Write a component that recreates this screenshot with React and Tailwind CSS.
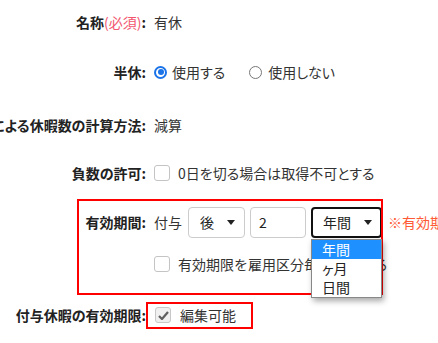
import React from 'react';

const font = { fontFamily: '"Noto Sans CJK JP", "Liberation Sans", sans-serif' };

function Label({ children }) {
  return (
    <div className="w-[146px] shrink-0 flex justify-end whitespace-nowrap font-bold text-[#222]">
      {children}
    </div>
  );
}

function Row({ h, children }) {
  return <div className={`flex items-center ${h}`}>{children}</div>;
}

function Radio({ checked }) {
  return checked ? (
    <span className="block w-[13px] h-[13px] rounded-full border-2 border-[#1a73e8] flex items-center justify-center bg-white">
      <span className="block w-[6px] h-[6px] rounded-full bg-[#1a73e8]" />
    </span>
  ) : (
    <span className="block w-[13px] h-[13px] rounded-full border border-[#777] bg-white" />
  );
}

function Checkbox({ checked }) {
  return (
    <span
      className={`w-[16px] h-[16px] rounded-[3px] border flex items-center justify-center ${
        checked ? 'border-[#c8c8c8] bg-[#f0f0f0]' : 'border-[#c4c4c4] bg-white'
      }`}
    >
      {checked && (
        <svg width="11" height="9" viewBox="0 0 11 9">
          <path d="M1 5 L4 8 L10 1" fill="none" stroke="#5f5f5f" strokeWidth="2.2" />
        </svg>
      )}
    </span>
  );
}

function Arrow() {
  return (
    <svg width="8" height="5" viewBox="0 0 8 5">
      <path d="M0 0 H8 L4 5 Z" fill="#222" />
    </svg>
  );
}

export default function App() {
  return (
    <div
      className="relative w-[438px] h-[343px] overflow-hidden bg-white text-[14px] text-[#333] [font-feature-settings:'palt']"
      style={font}
    >
      <Row h="h-[44px]">
        <Label>
          名称<span className="font-normal text-[#f2576f]">(必須)</span>:
        </Label>
        <span className="ml-[8px]">有休</span>
      </Row>

      <Row h="h-[56px]">
        <Label>半休:</Label>
        <div className="ml-[8px] flex items-center">
          <Radio checked />
          <span className="ml-[5px]">使用する</span>
          <span className="ml-[24px]"><Radio /></span>
          <span className="ml-[6px]">使用しない</span>
        </div>
      </Row>

      <Row h="h-[50px]">
        <Label>端数による休暇数の計算方法:</Label>
        <span className="ml-[8px]">減算</span>
      </Row>

      <Row h="h-[46px]">
        <Label>負数の許可:</Label>
        <div className="ml-[8px] flex items-center">
          <Checkbox />
          <span className="ml-[8px]">0日を切る場合は取得不可とする</span>
        </div>
      </Row>

      <Row h="h-[52px]">
        <Label>有効期間:</Label>
        <div className="ml-[8px] flex items-center whitespace-nowrap">
          <span>付与</span>
          <div className="ml-[6px] w-[57px] h-[31px] rounded-[4px] border border-[#ccc] flex items-center justify-between pl-[11px] pr-[9px] text-[#222]">
            <span>後</span>
            <Arrow />
          </div>
          <div className="ml-[5px] w-[56px] h-[31px] rounded-[4px] border border-[#ccc] flex items-center pl-[8px] text-[#222]">
            2
          </div>
          <div className="relative ml-[5px] w-[71px] h-[31px]">
            <div className="w-full h-full rounded-[4px] border-2 border-[#111] flex items-center justify-between pl-[10px] pr-[8px] text-[#222]">
              <span>年間</span>
              <Arrow />
            </div>
            <div className="absolute left-0 top-[32px] w-[71px] border border-[#888] bg-white shadow-[2px_3px_6px_rgba(0,0,0,0.35)] z-10 text-[#222]">
              <div className="h-[19px] flex items-center pl-[10px] bg-[#1e90ff] text-white">年間</div>
              <div className="h-[19px] flex items-center pl-[10px]">ヶ月</div>
              <div className="h-[19px] flex items-center pl-[10px]">日間</div>
            </div>
          </div>
          <span className="ml-[6px] text-[#ff5a36]">※有効期間は付与日からの期間です</span>
        </div>
      </Row>

      <Row h="h-[32px]">
        <div className="w-[146px] shrink-0" />
        <div className="ml-[8px] flex items-center whitespace-nowrap">
          <Checkbox />
          <span className="ml-[8px] [font-feature-settings:normal]">有効期限を雇用区分毎に設定する</span>
        </div>
      </Row>

      <div className="h-[18px]" />

      <Row h="h-[34px]">
        <Label>付与休暇の有効期限:</Label>
        <div className="ml-[9px] flex items-center">
          <Checkbox checked />
          <span className="ml-[9px]">編集可能</span>
        </div>
      </Row>

      {/* 赤枠の注釈 */}
      <div className="absolute left-[77px] top-[199px] w-[306px] h-[96px] border-2 border-[#f00] pointer-events-none" />
      <div className="absolute left-[146px] top-[302px] w-[107px] h-[27px] border-2 border-[#f00] pointer-events-none" />
    </div>
  );
}
